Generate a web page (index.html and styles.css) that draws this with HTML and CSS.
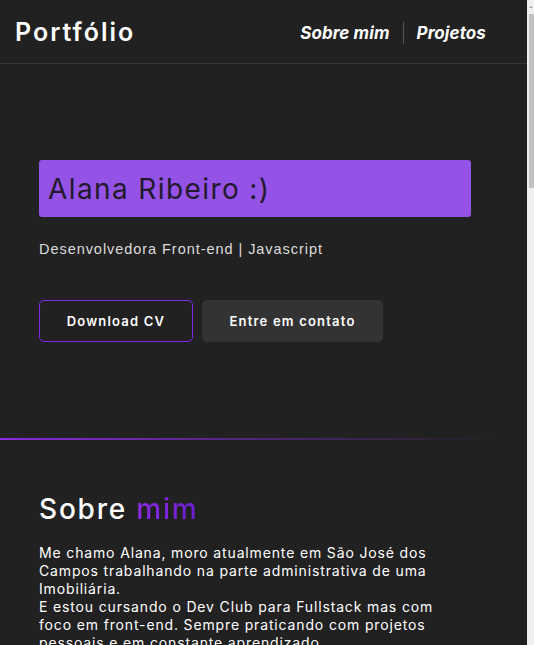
FILE: index.html
```html
<!DOCTYPE html>
<html lang="pt-BR">
<head>
<meta charset="utf-8">
<title>Portfólio</title>
<link rel="stylesheet" href="styles.css">
</head>
<body>
<header class="header">
  <h1 class="logo">Portfólio</h1>
  <nav class="nav">
    <a class="nav-link" href="#sobre">Sobre mim</a>
    <span class="nav-sep"></span>
    <a class="nav-link" href="#projetos">Projetos</a>
  </nav>
</header>
<main>
  <section class="hero">
    <h2 class="hero-name">Alana Ribeiro :)</h2>
    <p class="hero-role">Desenvolvedora Front-end | Javascript</p>
    <div class="hero-actions">
      <a class="btn btn-outline" href="#">Download CV</a>
      <a class="btn btn-filled" href="#">Entre em contato</a>
    </div>
  </section>
  <div class="divider"></div>
  <section class="about" id="sobre">
    <h2 class="section-title">Sobre <span class="accent">mim</span></h2>
    <p class="about-text">Me chamo Alana, moro atualmente em São José dos Campos trabalhando na parte administrativa de uma Imobiliária.<br>E estou cursando o Dev Club para Fullstack mas com foco em front-end. Sempre praticando com projetos pessoais e em constante aprendizado.</p>
  </section>
  <section class="projects" id="projetos">
    <h2 class="section-title">Projetos</h2>
  </section>
</main>
<div class="scrollbar" aria-hidden="true">
  <span class="scroll-arrow"></span>
  <span class="scroll-thumb"></span>
</div>
</body>
</html>
```
FILE: styles.css
```css
* { box-sizing: border-box; }
html, body { margin: 0; padding: 0; }
body {
  background: #212121;
  color: #ffffff;
  font-family: "Inter", "Noto Sans", sans-serif;
  margin-right: 7px;
}
a { color: inherit; text-decoration: none; }
.header {
  height: 64px;
  display: flex;
  align-items: center;
  justify-content: space-between;
  padding: 0 41px 0 15px;
  border-bottom: 1px solid #353535;
}
.logo {
  margin: 0;
  font-size: 25px;
  font-weight: 600;
  letter-spacing: 2px;
}
.nav {
  display: flex;
  align-items: center;
  gap: 13px;
  padding-top: 3px;
}
.nav-link {
  font-size: 17px;
  font-weight: 700;
  font-style: italic;
  letter-spacing: 0.1px;
}
.nav-sep {
  width: 1px;
  height: 22px;
  background: #555;
}
.hero {
  padding: 96px 56px 96px 39px;
}
.hero-name {
  margin: 0;
  height: 57px;
  display: flex;
  align-items: center;
  padding: 0 9px;
  background: #9452e6;
  color: #221a2b;
  border-radius: 3px;
  font-size: 28px;
  font-weight: 400;
  letter-spacing: 1.4px;
}
.hero-role {
  margin: 24px 0 0;
  font-family: "Liberation Sans", Arial, sans-serif;
  font-size: 14.5px;
  letter-spacing: 0.95px;
  color: #dcdcdc;
}
.hero-actions {
  display: flex;
  gap: 9px;
  margin-top: 43px;
}
.btn {
  height: 42px;
  display: flex;
  align-items: center;
  justify-content: center;
  border-radius: 5px;
  font-size: 13px;
  font-weight: 600;
  letter-spacing: 1.2px;
}
.btn-outline {
  width: 154px;
  border: 1px solid #7c2ae8;
}
.btn-filled {
  width: 181px;
  background: #333333;
}
.divider {
  height: 2px;
  width: 500px;
  background: linear-gradient(90deg, #8a2be2 0%, rgba(138,43,226,0.45) 50%, rgba(138,43,226,0) 100%);
}
.about {
  padding: 52px 56px 60px 39px;
}
.section-title {
  margin: 0;
  font-size: 28px;
  font-weight: 500;
  letter-spacing: 1.8px;
}
.accent {
  background: linear-gradient(90deg, #8a2be2, #6a1fd0);
  -webkit-background-clip: text;
  background-clip: text;
  color: transparent;
}
.about-text {
  margin: 18px 0 0;
  max-width: 410px;
  font-size: 14px;
  line-height: 18px;
  letter-spacing: 0.85px;
}
.projects {
  padding: 60px 39px 1400px;
}
.scrollbar {
  position: fixed;
  top: 0;
  right: 0;
  width: 7px;
  height: 100%;
  background: #f0f0f0;
}
.scroll-arrow {
  position: absolute;
  top: 6px;
  left: 2px;
  width: 0;
  height: 0;
  border-left: 2px solid transparent;
  border-right: 2px solid transparent;
  border-bottom: 2px solid #a3a3a3;
}
.scroll-thumb {
  position: absolute;
  top: 14px;
  left: 2px;
  width: 5px;
  height: 174px;
  background: #c1c1c1;
}
```
